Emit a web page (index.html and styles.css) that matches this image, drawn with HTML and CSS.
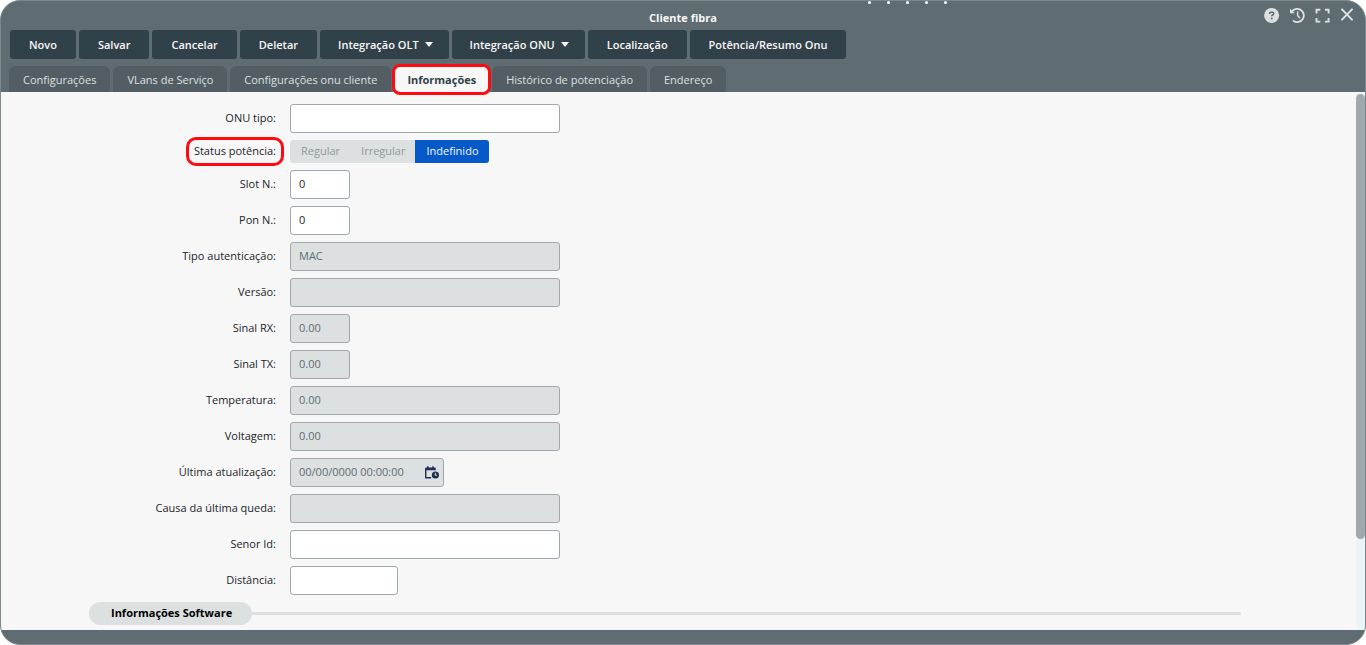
FILE: index.html
```html
<!DOCTYPE html>
<html lang="pt-BR">
<head>
<meta charset="utf-8">
<title>Cliente fibra</title>
<link rel="stylesheet" href="styles.css">
</head>
<body>
<main class="window">
  <header class="header">
    <div class="dots" aria-hidden="true"><i></i><i></i><i></i><i></i><i></i></div>
    <div class="titlebar">
      <h1 class="title">Cliente fibra</h1>
      <div class="window-actions">
        <button type="button" class="icon-button" aria-label="Ajuda">
          <svg width="16" height="16" viewBox="0 0 16 16"><circle cx="7.6" cy="8.4" r="7.5" fill="#dce0e1"/><path d="M5.6 7V6.5Q5.7 5.3 6.9 5.3H8.3Q9.7 5.3 9.7 6.5T8.6 8Q7.7 8.3 7.7 9.3" fill="none" stroke="#5f6c72" stroke-width="1.6"/><circle cx="7.7" cy="11.4" r="1" fill="#5f6c72"/></svg>
        </button>
        <button type="button" class="icon-button" aria-label="Histórico">
          <svg width="16" height="16" viewBox="0 0 16 16" fill="none" stroke="#dce0e1"><path d="M3 4.4A6.6 6.6 0 1 1 4.6 14" stroke-width="1.8" stroke-linecap="round"/><path d="M1 1.7V6.2H5.8Z" fill="#dce0e1" stroke="none"/><path d="M8.6 4.9V8.6L10.6 10.7" stroke-width="1.4" stroke-linecap="round"/></svg>
        </button>
        <button type="button" class="icon-button" aria-label="Tela cheia">
          <svg width="16" height="16" viewBox="0 0 16 16" fill="none" stroke="#dce0e1" stroke-width="1.9"><path d="M2.5 6.6V2.8H6.3M10.9 2.8H14.6V6.6M14.6 11V14.6H10.9M6.3 14.6H2.5V11"/></svg>
        </button>
        <button type="button" class="icon-button" aria-label="Fechar">
          <svg width="16" height="16" viewBox="0 0 16 16" fill="none" stroke="#dce0e1" stroke-width="2" stroke-linecap="round"><path d="M3 2.4L13 12.6M13 2.4L3 12.6"/></svg>
        </button>
      </div>
    </div>
    <div class="toolbar">
      <button type="button" class="btn">Novo</button>
      <button type="button" class="btn">Salvar</button>
      <button type="button" class="btn">Cancelar</button>
      <button type="button" class="btn">Deletar</button>
      <button type="button" class="btn btn-menu">Integração OLT <span class="caret"></span></button>
      <button type="button" class="btn btn-menu">Integração ONU <span class="caret"></span></button>
      <button type="button" class="btn">Localização</button>
      <button type="button" class="btn">Potência/Resumo Onu</button>
    </div>
    <nav class="tabs">
      <button type="button" class="tab">Configurações</button>
      <button type="button" class="tab">VLans de Serviço</button>
      <button type="button" class="tab">Configurações onu cliente</button>
      <button type="button" class="tab tab-active">Informações</button>
      <button type="button" class="tab">Histórico de potenciação</button>
      <button type="button" class="tab">Endereço</button>
    </nav>
  </header>
  <div class="content">
    <form class="form">
      <div class="row"><label for="tipo">ONU tipo:</label><input id="tipo" class="field" type="text"></div>
      <div class="row"><span class="label-box" id="status">Status potência:</span>
        <div class="segmented" role="radiogroup" aria-labelledby="status">
          <label class="segment"><input type="radio" name="status">Regular</label>
          <label class="segment"><input type="radio" name="status">Irregular</label>
          <label class="segment"><input type="radio" name="status" checked>Indefinido</label>
        </div>
      </div>
      <div class="row"><label for="slot">Slot N.:</label><input id="slot" class="field field-small" type="text" value="0"></div>
      <div class="row"><label for="pon">Pon N.:</label><input id="pon" class="field field-small" type="text" value="0"></div>
      <div class="row"><label for="auth">Tipo autenticação:</label><input id="auth" class="field" type="text" value="MAC" disabled></div>
      <div class="row"><label for="versao">Versão:</label><input id="versao" class="field" type="text" disabled></div>
      <div class="row"><label for="rx">Sinal RX:</label><input id="rx" class="field field-small" type="text" value="0.00" disabled></div>
      <div class="row"><label for="tx">Sinal TX:</label><input id="tx" class="field field-small" type="text" value="0.00" disabled></div>
      <div class="row"><label for="temp">Temperatura:</label><input id="temp" class="field" type="text" value="0.00" disabled></div>
      <div class="row"><label for="volt">Voltagem:</label><input id="volt" class="field" type="text" value="0.00" disabled></div>
      <div class="row"><label for="data">Última atualização:</label>
        <div class="date">
          <input id="data" class="field field-date" type="text" value="00/00/0000 00:00:00" disabled>
          <svg class="calendar" width="16" height="14" viewBox="0 0 16 14" aria-hidden="true"><path d="M1.7 3V11.7H7.2" fill="none" stroke="#202f52" stroke-width="1.4" stroke-linejoin="round"/><path d="M1 4.2V2.8Q1 1.5 2.3 1.5H10.4Q11.8 1.5 11.8 2.8V4.2Z" fill="#202f52"/><path d="M3.8 .2V3M9 .2V3" stroke="#202f52" stroke-width="1.5"/><circle cx="11.4" cy="9" r="3.6" fill="#202f52"/><path d="M11.2 6.8V9.2H13" fill="none" stroke="#dce0e1" stroke-width="1"/></svg>
        </div>
      </div>
      <div class="row"><label for="causa">Causa da última queda:</label><input id="causa" class="field" type="text" disabled></div>
      <div class="row"><label for="senor">Senor Id:</label><input id="senor" class="field" type="text"></div>
      <div class="row"><label for="dist">Distância:</label><input id="dist" class="field field-medium" type="text"></div>
      <div class="section"><h2 class="section-title">Informações Software</h2></div>
    </form>
    <div class="scroll-track"><div class="scroll-thumb"></div></div>
  </div>
  <footer class="footer"></footer>
</main>
</body>
</html>
```

FILE: styles.css
```css
* { box-sizing: border-box; }

body {
  margin: 0;
  background: #fff;
  font: 11px/15px "Open Sans", "Noto Sans", sans-serif;
  color: #212529;
}

button, input { font: inherit; }

.window {
  display: flex;
  flex-direction: column;
  min-height: 100vh;
  overflow: hidden;
  border: 1px solid #7c888d;
  border-radius: 20px;
  background: #5f6c72;
}

.header { position: relative; }

.dots {
  position: absolute;
  top: 0;
  left: 867px;
  display: flex;
  gap: 16px;
}

.dots i {
  width: 3px;
  height: 3px;
  border-radius: 50%;
  background: #fff;
}

.titlebar {
  display: grid;
  grid-template-columns: 1fr auto 1fr;
  padding: 6px 10px 0;
  height: 29px;
}

.title {
  grid-column: 2;
  margin: 3px 0 0;
  font-size: 11px;
  font-weight: 700;
  color: #f7f7f7;
}

.window-actions {
  display: flex;
  justify-content: flex-end;
  gap: 9px;
}

.icon-button {
  width: 16px;
  height: 16px;
  padding: 0;
  border: 0;
  background: none;
}

.icon-button svg { display: block; }

.toolbar {
  display: flex;
  gap: 3px;
  padding: 0 9px;
}

.btn {
  height: 29px;
  padding: 0 19px;
  border: 0;
  border-radius: 3px;
  background: #314149;
  color: #f7f7f7;
  font-weight: 600;
}

.btn-menu {
  display: flex;
  align-items: center;
  gap: 6px;
  padding: 0 16px 0 18px;
}

.caret {
  border: 4px solid transparent;
  border-top: 5px solid #f7f7f7;
  border-bottom: 0;
}

.tabs {
  display: flex;
  gap: 3px;
  padding: 7px 8px 0;
}

.tab {
  height: 26px;
  padding: 0 14px;
  border: 0;
  border-radius: 6px 6px 0 0;
  background: #525e63;
  color: #dce0e1;
}

.tab-active {
  position: relative;
  z-index: 1;
  height: 27px;
  margin-bottom: -1px;
  padding: 0 13px;
  background: #f7f7f7;
  color: #314149;
  font-weight: 700;
  outline: 3px solid #ff0a10;
  outline-offset: -1px;
  border-radius: 6px;
}

.content {
  display: flex;
  flex: 1;
  background: #f7f7f7;
}

.form {
  flex: 1;
  padding: 12px 0 5px;
}

.row {
  display: grid;
  grid-template-columns: 275px 1fr;
  column-gap: 14px;
  align-items: center;
  justify-items: start;
  margin-bottom: 7px;
}

.row > label, .label-box {
  justify-self: end;
  padding-bottom: 2px;
}

.label-box {
  line-height: 11px;
  outline: 3px solid #ff0a10;
  outline-offset: 5px;
  border-radius: 2px;
}

.field {
  display: block;
  width: 270px;
  height: 29px;
  padding: 0 8px 2px;
  border: 1px solid #9fa9ad;
  border-radius: 3px;
  background: #fff;
  color: #212529;
}

.field:disabled {
  background: #dce0e1;
  color: #5f6c72;
}

.field-small { width: 60px; }
.field-medium { width: 108px; }
.field-date { width: 154px; }

.date { position: relative; }

.calendar {
  position: absolute;
  top: 8px;
  right: 4px;
}

.segmented {
  display: flex;
  overflow: hidden;
  border-radius: 3px;
  background: #dce0e1;
}

.segment {
  position: relative;
  padding: 0 10px 2px 11px;
  line-height: 21px;
  color: #8e999e;
}

.segment input {
  position: absolute;
  margin: 0;
  appearance: none;
}

.segment:has(:checked) {
  background: #0559c9;
  color: #f7f7f7;
}

.section {
  display: flex;
  align-items: center;
  margin: 0 115px 0 88px;
}

.section::after {
  content: "";
  flex: 1;
  height: 3px;
  border-radius: 0 2px 2px 0;
  background: #dce0e1;
}

.section-title {
  margin: 0;
  padding: 0 20px 2px 22px;
  border-radius: 12px;
  background: #dce0e1;
  color: #000;
  font-size: 11px;
  font-weight: 700;
  line-height: 21px;
}

.scroll-track {
  width: 9px;
  padding-top: 2px;
  background: #eaf3f7;
  border-radius: 5px;
}

.scroll-thumb {
  height: 83%;
  border-radius: 5px;
  background: #a0a9ae;
}

.footer { height: 14px; }
```
